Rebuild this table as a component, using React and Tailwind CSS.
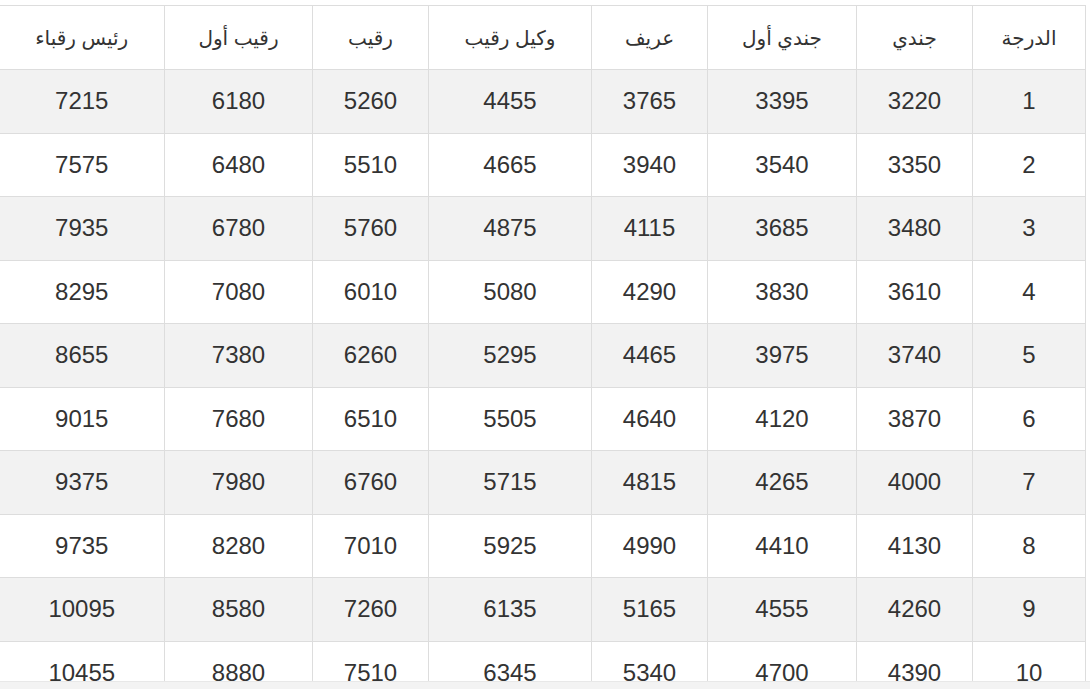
import React from "react";

const headers = ["الدرجة", "جندي", "جندي أول", "عريف", "وكيل رقيب", "رقيب", "رقيب أول", "رئيس رقباء"];
const widths = [113, 116, 149, 116, 163, 116, 148, 165];
const rows = [
  [1, 3220, 3395, 3765, 4455, 5260, 6180, 7215],
  [2, 3350, 3540, 3940, 4665, 5510, 6480, 7575],
  [3, 3480, 3685, 4115, 4875, 5760, 6780, 7935],
  [4, 3610, 3830, 4290, 5080, 6010, 7080, 8295],
  [5, 3740, 3975, 4465, 5295, 6260, 7380, 8655],
  [6, 3870, 4120, 4640, 5505, 6510, 7680, 9015],
  [7, 4000, 4265, 4815, 5715, 6760, 7980, 9375],
  [8, 4130, 4410, 4990, 5925, 7010, 8280, 9735],
  [9, 4260, 4555, 5165, 6135, 7260, 8580, 10095],
  [10, 4390, 4700, 5340, 6345, 7510, 8880, 10455],
];

export default function App() {
  return (
    <div className="w-[1090px] h-[689px] bg-white overflow-hidden flex flex-col" style={{ fontFamily: '"Liberation Sans", "DejaVu Sans", Arial, sans-serif' }}>
      <div className="h-[681px] w-[1086px] overflow-hidden pt-[5px]" dir="rtl">
        <table className="table-fixed border-collapse w-[1086px] text-[#333]">
          <colgroup>
            {widths.map((w, i) => (
              <col key={i} style={{ width: w }} />
            ))}
          </colgroup>
          <thead>
            <tr className="h-[64px] bg-white">
              {headers.map((h, i) => (
                <th key={i} className={`border border-[#dddddd] text-center align-middle font-normal text-[20px] ${i === 7 ? "border-l-0" : ""}`}>
                  {h}
                </th>
              ))}
            </tr>
          </thead>
          <tbody>
            {rows.map((r, ri) => (
              <tr key={ri} className={`h-[63.5px] ${ri % 2 === 0 ? "bg-[#f2f2f2]" : "bg-white"}`}>
                {r.map((c, ci) => (
                  <td key={ci} className={`border border-[#dddddd] text-center align-middle text-[24px] ${ci === 7 ? "border-l-0" : ""}`}>
                    {c}
                  </td>
                ))}
              </tr>
            ))}
          </tbody>
        </table>
      </div>
      <div className="h-[8px] bg-[#f3f3f3] border-t border-[#e8e8e8]" />
    </div>
  );
}
